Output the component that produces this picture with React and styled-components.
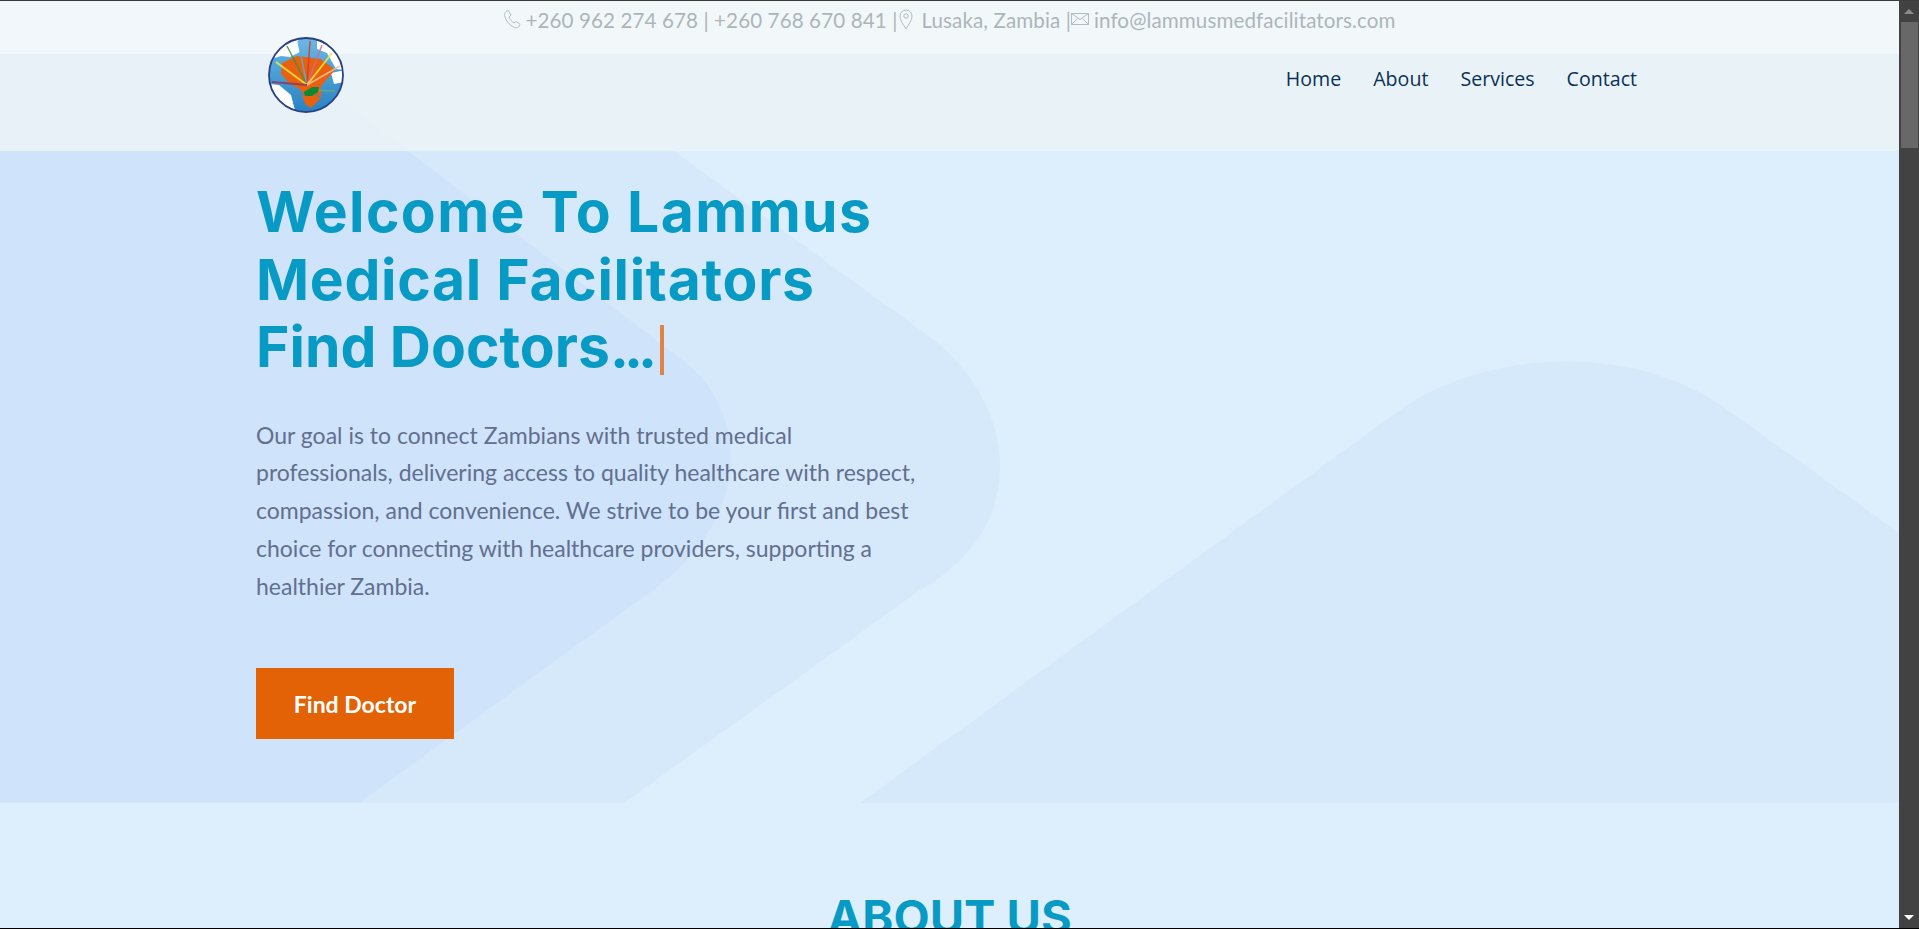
import React from "react";
import styled, { createGlobalStyle } from "styled-components";

const GlobalStyle = createGlobalStyle`
  html, body {
    margin: 0;
    height: 100%;
    overflow: hidden;
    background: #ddeefd;
  }
  * { box-sizing: border-box; }
`;

const Screen = styled.div`
  display: flex;
  width: 1919px;
  height: 929px;
  overflow: hidden;
  border-top: 1px solid #3b3b3b;
  border-bottom: 1px solid #000;
`;

const Page = styled.main`
  position: relative;
  flex: 1;
  min-width: 0;
  overflow: hidden;
  background: #ddeefd;
`;

const Scrollbar = styled.div`
  width: 20px;
  flex: none;
  background: #424242;
  display: flex;
  flex-direction: column;
`;

const Arrow = styled.div`
  height: 21px;
  flex: none;
  display: flex;
  align-items: center;
  justify-content: center;
  margin-top: ${(p) => (p.$down ? "auto" : "0")};
  &::before {
    content: "";
    border-left: 5px solid transparent;
    border-right: 5px solid transparent;
    ${(p) =>
      p.$down
        ? "border-top: 5px solid #fff;"
        : "border-bottom: 5px solid #8c8c8c;"}
  }
`;

const Thumb = styled.div`
  width: 17px;
  height: 126px;
  margin-left: 2px;
  background: #686868;
`;

const HeroArt = styled.svg`
  position: absolute;
  left: 0;
  top: 0;
  width: 1899px;
  height: 802px;
`;

const Header = styled.header`
  position: relative;
`;

const ContactBar = styled.div`
  height: 53px;
  padding-top: 8px;
  background: rgba(244, 248, 249, 0.9);
  display: flex;
  justify-content: center;
  align-items: flex-start;
  font-family: "Lato", "Liberation Sans", sans-serif;
  font-size: 20.6px;
  line-height: 23px;
  letter-spacing: 0.1px;
  color: #adb5b9;
  white-space: nowrap;
`;

const ContactIcon = styled.svg`
  width: 18px;
  height: 20px;
  margin: 0 ${(p) => p.$gap || 4}px 0 0;
  fill: none;
  stroke: #b4bcc0;
  stroke-width: 1;
`;

const Nav = styled.div`
  height: 97px;
  padding: 0 262px 0 256px;
  background: rgba(235, 243, 246, 0.85);
  display: flex;
  justify-content: space-between;
  align-items: flex-start;
`;

const Logo = styled.svg`
  width: 78px;
  height: 78px;
  margin: -18px 0 0 11px;
  filter: blur(0.35px);
`;

const NavLinks = styled.nav`
  display: flex;
  gap: 32px;
  padding-top: 12px;
`;

const NavLink = styled.a`
  font-family: "Open Sans", "Liberation Sans", sans-serif;
  font-size: 19.6px;
  font-weight: 500;
  line-height: 26px;
  color: #0c3058;
`;

const Hero = styled.section`
  position: relative;
  height: 652px;
  padding: 27px 0 0 256px;
`;

const Title = styled.h1`
  margin: 0;
  font-family: "Inter", "Liberation Sans", sans-serif;
  font-size: 57px;
  font-weight: 700;
  line-height: 67.5px;
  color: #079ac4;
`;

const TitleLine = styled.span`
  display: block;
  letter-spacing: ${(p) => p.$spacing}px;
`;

const Dots = styled.span`
  letter-spacing: -5px;
`;

const Caret = styled.span`
  display: inline-block;
  width: 4px;
  height: 50px;
  margin-left: 8px;
  vertical-align: -8px;
  background: #e08345;
`;

const Lead = styled.p`
  width: 668px;
  margin: 36px 0 0;
  font-family: "Lato", "Liberation Sans", sans-serif;
  font-size: 23px;
  line-height: 37.8px;
  color: #626f8f;
`;

const CTA = styled.a`
  display: flex;
  align-items: center;
  justify-content: center;
  width: 198px;
  height: 71px;
  margin-top: 63px;
  background: #e26205;
  color: #fff;
  font-family: "Lato", "Liberation Sans", sans-serif;
  font-size: 23px;
  font-weight: 700;
`;

const About = styled.section`
  position: relative;
  padding-top: 87px;
  text-align: center;
`;

const AboutTitle = styled.h2`
  margin: 0;
  font-family: "Inter", "Liberation Sans", sans-serif;
  font-size: 47px;
  font-weight: 700;
  line-height: 54px;
  color: #079ac4;
`;

const PhoneGlyph = () => (
  <ContactIcon viewBox="0 0 18 20">
    <path d="M3 2.5 5.5 1.5 8 6 6 8c.8 2.6 2.6 4.6 5 6l2-1.6 4 3-1.5 2.6c-.8 1-2.6 1-4 .5C6.500 16.500 2.500 11.500 1.600 6.500 1.400 5 1.900 3.300 3 2.500Z" />
  </ContactIcon>
);

const PinGlyph = () => (
  <ContactIcon viewBox="0 0 18 20" $gap={6}>
    <path d="M9 20C6 15 3 11.500 3 7a6 6 0 0 1 12 0c0 4.500-3 8-6 13Z" />
    <circle cx="9" cy="7" r="2.200" />
  </ContactIcon>
);

const MailGlyph = () => (
  <ContactIcon viewBox="0 0 18 20" $gap={5}>
    <rect x="0.500" y="4.500" width="17" height="11" />
    <path d="m.5 4.500 8.500 6 8.500-6M.5 15.500l6-6M17.500 15.500l-6-6" />
  </ContactIcon>
);

const LogoMark = () => (
  <Logo viewBox="0 0 78 78">
    <defs>
      <clipPath id="globe">
        <circle cx="39" cy="39" r="36.500" />
      </clipPath>
      <linearGradient id="sea" x1="0" y1="0" x2="0" y2="1">
        <stop offset="0" stopColor="#6db8e4" />
        <stop offset="1" stopColor="#2583c4" />
      </linearGradient>
    </defs>
    <circle cx="39" cy="39" r="37" fill="url(#sea)" />
    <g clipPath="url(#globe)">
      <path d="M12 2h19l2 14-10 5-9-1-10 3ZM50 0l24 12 6 22-11-1-9-16-10-4ZM3 48l9 1 12 10 4 15-17-5ZM64 37l14-3v12l-11 2Z" fill="#fff" />
      <path d="M15 27 30 20l24 3 14 11-8 9-6 7v12l-10 10-6-4-4-14-12-7-8-9Z" fill="#e8610f" />
      <g strokeWidth="1.500" fill="none" opacity="0.85">
        <path d="M40 49 20 10" stroke="#3f9440" />
        <path d="M40 49 31 5" stroke="#58aee0" />
        <path d="M40 49 43 5" stroke="#d33a2e" />
        <path d="M40 49 55 9" stroke="#cf6aa0" />
        <path d="M40 49 65 17" stroke="#f7e63a" strokeWidth="2" />
        <path d="M40 49 73 30" stroke="#f4bd95" strokeWidth="2" />
        <path d="M40 49 9 26" stroke="#f7e63a" strokeWidth="2" />
        <path d="M40 49 5 46" stroke="#8b3a62" strokeWidth="2" />
        <path d="M42 54 68 55" stroke="#6bab78" />
        <path d="M38 56 26 68" stroke="#4a86b8" />
        <path d="M46 56 58 66" stroke="#4a86b8" />
      </g>
      <path d="M37 56 45 51h7l-1 5-6 4-7 0Z" fill="#0c8a33" />
    </g>
    <circle cx="39" cy="39" r="37" fill="none" stroke="#2c3f7e" strokeWidth="1.800" />
  </Logo>
);

export default function App() {
  return (
    <>
      <GlobalStyle />
      <Screen>
        <Page>
          <HeroArt viewBox="0 1 1899 802">
            <path d="M467 1 930 337C1020 405 1030 530 920 590L624 803H0V1Z" fill="#d6e9fb" />
            <path d="M0 1H211L685 362C745 410 755 510 660 585L359 803H0Z" fill="#cfe3fb" />
            <path d="M860 803 1397 412C1490 345 1640 345 1728 410L1899 533V803Z" fill="#d6e9fb" />
          </HeroArt>
          <Header>
            <ContactBar>
              <PhoneGlyph />
              +260 962 274 678 | +260 768 670 841 |
              <PinGlyph />
              Lusaka, Zambia |
              <MailGlyph />
              info@lammusmedfacilitators.com
            </ContactBar>
            <Nav>
              <LogoMark />
              <NavLinks>
                <NavLink>Home</NavLink>
                <NavLink>About</NavLink>
                <NavLink>Services</NavLink>
                <NavLink>Contact</NavLink>
              </NavLinks>
            </Nav>
          </Header>
          <Hero>
            <Title>
              <TitleLine $spacing={1.4}>Welcome To Lammus</TitleLine>
              <TitleLine $spacing={0.7}>Medical Facilitators</TitleLine>
              <TitleLine $spacing={0}>
                Find Doctors<Dots>...</Dots>
                <Caret />
              </TitleLine>
            </Title>
            <Lead>
              Our goal is to connect Zambians with trusted medical professionals,
              delivering access to quality healthcare with respect, compassion,
              and convenience. We strive to be your first and best choice for
              connecting with healthcare providers, supporting a healthier Zambia.
            </Lead>
            <CTA>Find Doctor</CTA>
          </Hero>
          <About>
            <AboutTitle>ABOUT US</AboutTitle>
          </About>
        </Page>
        <Scrollbar>
          <Arrow />
          <Thumb />
          <Arrow $down />
        </Scrollbar>
      </Screen>
    </>
  );
}
